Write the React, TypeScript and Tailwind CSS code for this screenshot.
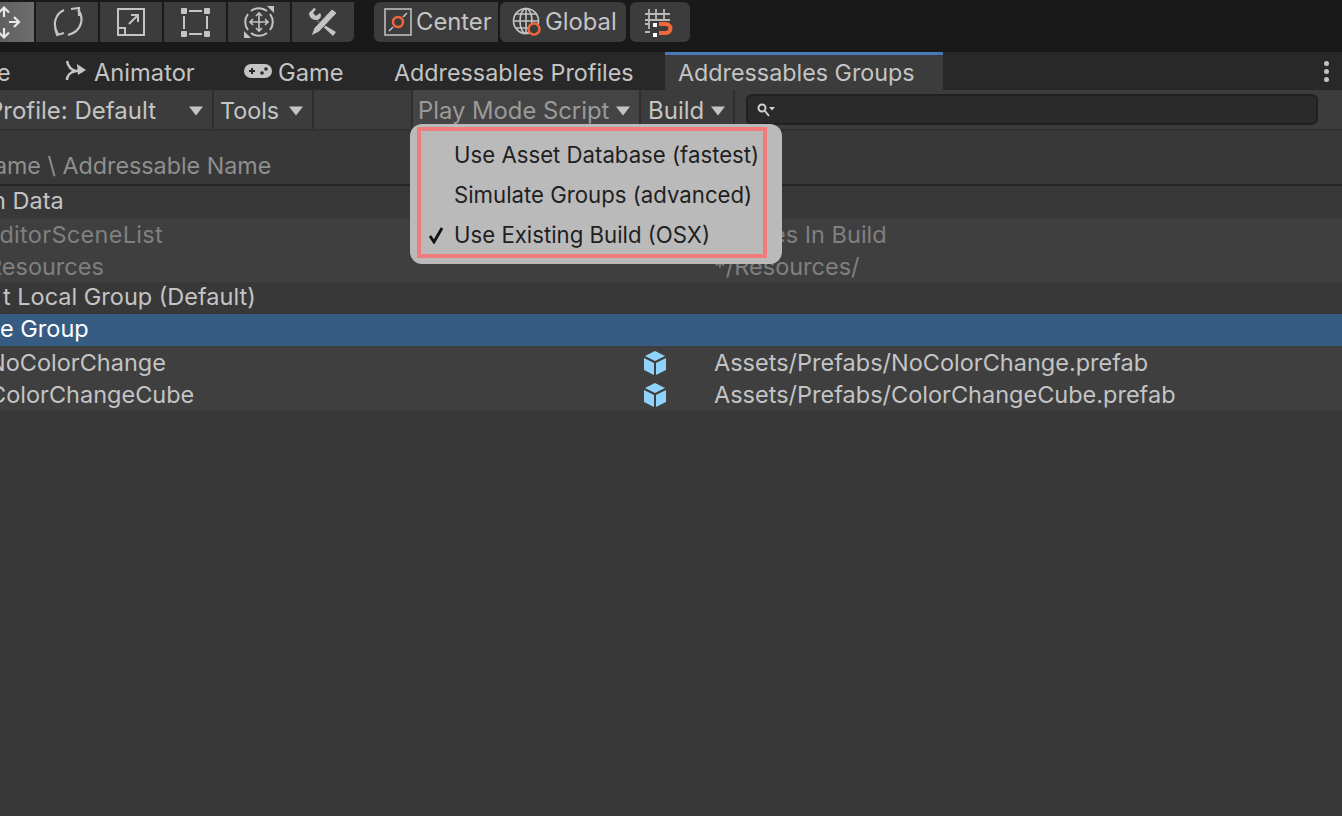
import type { ReactNode } from "react";

const Arrow = ({ className = "" }: { className?: string }) => (
  <svg width="16" height="10" viewBox="0 0 16 10" className={className}>
    <path d="M1 0.5h14L8 9.500z" fill="#c4c4c4" />
  </svg>
);

const ToolBtn = ({ children, className = "" }: { children: ReactNode; className?: string }) => (
  <div className={`flex h-10 w-[62px] items-center justify-center bg-[#3c3c3c] ${className}`}>{children}</div>
);

const MoveIcon = () => (
  <svg width="34" height="40" viewBox="0 0 34 40" fill="none" stroke="#e8e8e8" strokeWidth="2.200">
    <path d="M4 6v9M-1 10.500l5-5 5 5M4 26v9M-1 30.500l5 5 5-5M9 20h10M14 15l5 5-5 5" />
  </svg>
);

const RotateIcon = () => (
  <svg width="32" height="34" viewBox="0 0 32 34" fill="none" stroke="#c4c4c4" strokeWidth="2.200">
    <path d="M13 5C6 8 0 18 7 29M4 23l2 7 7-2M27 5c6 7 5 21-10 25M20 4l8-1 0 8" />
  </svg>
);

const ScaleIcon = () => (
  <svg width="30" height="30" viewBox="0 0 30 30" fill="none" stroke="#c4c4c4" strokeWidth="2">
    <rect x="2" y="2" width="26" height="26" />
    <path d="M2 21h7v7M13 17L22 8M15 8h7v7" />
  </svg>
);

const RectIcon = () => (
  <svg width="30" height="30" viewBox="0 0 30 30" fill="#c4c4c4">
    <rect x="1" y="1" width="6" height="6" rx="1" />
    <rect x="24" y="1" width="6" height="6" rx="1" />
    <rect x="1" y="24" width="6" height="6" rx="1" />
    <rect x="24" y="24" width="6" height="6" rx="1" />
    <rect x="9" y="3" width="13" height="2" />
    <rect x="9" y="26" width="13" height="2" />
    <rect x="3" y="9" width="2" height="13" />
    <rect x="26" y="9" width="2" height="13" />
  </svg>
);

const TransformIcon = () => (
  <svg width="34" height="34" viewBox="0 0 34 34" fill="none" stroke="#c4c4c4" strokeWidth="1.600">
    <path d="M9 6a13 13 0 0 1 16 0M28 9a13 13 0 0 1 0 16M25 28a13 13 0 0 1-16 0M6 25a13 13 0 0 1 0-16" strokeWidth="2" />
    <path d="M17 8v18M8 17h18M14 11l3-3 3 3M14 23l3 3 3-3M11 14l-3 3 3 3M23 14l3 3-3 3" />
    <path d="M25 1h7v7zM2 26v7h7z" fill="#c4c4c4" stroke="none" />
  </svg>
);

const ToolsIcon = () => (
  <svg width="32" height="32" viewBox="0 0 32 32" fill="#c4c4c4">
    <path d="M2 7l5-5 2 1-3 4 3 3 4-3 1 2c0 3-2 5-5 5L29 26l-3 4L9 14C5 14 2 11 2 7z" />
    <path d="M25 3l5 4-18 19-8 4 3-8z" stroke="#3c3c3c" strokeWidth="1" />
  </svg>
);

const CenterIcon = () => (
  <svg width="28" height="28" viewBox="0 0 28 28" fill="none">
    <rect x="1" y="1" width="26" height="26" stroke="#c4c4c4" strokeWidth="1.500" />
    <path d="M5 23l4-4M19 9l4-4" stroke="#c4c4c4" strokeWidth="1.500" />
    <circle cx="14" cy="14" r="5" stroke="#f0673a" strokeWidth="2.500" />
  </svg>
);

const GlobalIcon = () => (
  <svg width="30" height="30" viewBox="0 0 30 30" fill="none">
    <g stroke="#c4c4c4" strokeWidth="1.600">
      <circle cx="14" cy="14" r="12.500" />
      <ellipse cx="14" cy="14" rx="6" ry="12.500" />
      <path d="M2 14h24M4 7h20M4 21h20M14 1v26" />
    </g>
    <circle cx="22" cy="22" r="5.500" fill="#3c3c3c" stroke="#f0673a" strokeWidth="2.500" />
  </svg>
);

const SnapIcon = () => (
  <svg width="32" height="30" viewBox="0 0 32 30" fill="none">
    <path d="M5 2v20M12 2v12M20 2v12M1 7h25M1 13h25M1 17h4M1 25h5" stroke="#b8b8b8" strokeWidth="1.800" />
    <rect x="9" y="16" width="4" height="4" fill="#fff" />
    <rect x="9" y="26" width="4" height="4" fill="#fff" />
    <path d="M15 17h7a4.500 4.500 0 0 1 0 9h-7" stroke="#f0673a" strokeWidth="4" />
  </svg>
);

const AnimatorIcon = () => (
  <svg width="22" height="22" viewBox="0 0 22 22" fill="none" stroke="#c4c4c4" strokeWidth="2.500">
    <path d="M2 1c1 5 4 9 9 10h7M2 20c0-4 3-8 9-9" />
    <path d="M12 4l9 6-8 5z" fill="#c4c4c4" stroke="none" />
  </svg>
);

const GameIcon = () => (
  <svg width="28" height="16" viewBox="0 0 28 16">
    <rect x="0" y="1" width="28" height="14" rx="7" fill="#c4c4c4" />
    <path d="M5 8h6M8 5v6" stroke="#282828" strokeWidth="2" />
    <circle cx="18" cy="10" r="1.800" fill="#282828" />
    <circle cx="22" cy="6" r="1.800" fill="#282828" />
  </svg>
);

const CubeIcon = () => (
  <svg width="24" height="26" viewBox="0 0 24 26" className="ml-[643px]">
    <path d="M12 1l10 5-10 5L2 6z" fill="#8fd2fc" />
    <path d="M1 8l10 5v12L1 20z" fill="#8fd2fc" />
    <path d="M23 8l-10 5v12l10-5z" fill="#8fd2fc" />
  </svg>
);

const SearchIcon = () => (
  <svg width="20" height="16" viewBox="0 0 20 16" fill="none">
    <circle cx="6" cy="6" r="3.500" stroke="#d0d0d0" strokeWidth="2" />
    <path d="M9 9l4 5" stroke="#d0d0d0" strokeWidth="2" />
    <path d="M13 5h6l-3 3.500z" fill="#d0d0d0" />
  </svg>
);

const CheckIcon = () => (
  <svg width="16" height="18" viewBox="0 0 16 18" fill="none" className="absolute -left-[26px] top-[11px]">
    <path d="M2 10l4 6L14 2" stroke="#111111" strokeWidth="2.800" />
  </svg>
);

const Row = ({ bg, children, className = "" }: { bg: string; children: ReactNode; className?: string }) => (
  <div className={`flex h-8 items-center whitespace-nowrap ${bg} ${className}`}>{children}</div>
);

export default function App() {
  return (
    <div className="relative flex h-[816px] w-[1342px] flex-col overflow-hidden bg-[#383838] font-['Inter',sans-serif] text-[23.500px] text-[#c4c4c4]">
      {/* top toolbar */}
      <div className="flex h-[52px] shrink-0 bg-[#191919] pt-0.5">
        <div className="flex h-10 gap-0.5">
          <div className="h-10 w-[34px] bg-gradient-to-r from-[#5f5f5f] to-[#6e6e6e]">
            <MoveIcon />
          </div>
          <ToolBtn><RotateIcon /></ToolBtn>
          <ToolBtn><ScaleIcon /></ToolBtn>
          <ToolBtn><RectIcon /></ToolBtn>
          <ToolBtn><TransformIcon /></ToolBtn>
          <ToolBtn className="rounded-br-md"><ToolsIcon /></ToolBtn>
        </div>
        <div className="ml-5 flex h-10 w-[124px] items-center gap-[4px] rounded-l-md bg-[#3c3c3c] pl-[10px] text-[23.800px]">
          <CenterIcon />
          <span>Center</span>
        </div>
        <div className="ml-0.5 flex h-10 w-[126px] items-center gap-[3px] rounded-md bg-[#3c3c3c] pl-[12px] text-[23.800px]">
          <GlobalIcon />
          <span>Global</span>
        </div>
        <div className="ml-1 flex h-10 w-[60px] items-center justify-center rounded-md bg-[#3c3c3c]">
          <SnapIcon />
        </div>
      </div>

      {/* tabs */}
      <div className="relative flex h-[38px] shrink-0 items-center whitespace-nowrap bg-[#282828] text-[23.300px]">
        <span className="-ml-[3px] mt-1 w-[68px]">e</span>
        <div className="flex w-[179px] items-center gap-[7px] text-[23.700px]">
          <AnimatorIcon />
          <span className="mt-1">Animator</span>
        </div>
        <div className="flex w-[150px] items-center gap-[6px] text-[23.700px]">
          <GameIcon />
          <span className="mt-1">Game</span>
        </div>
        <span className="mt-1 w-[271px]">Addressables Profiles</span>
        <div className="flex h-[38px] w-[278px] items-center border-t-[3px] border-[#4a78b8] bg-[#3c3c3c] pl-[13px] pt-px">
          Addressables Groups
        </div>
        <div className="ml-auto mr-[13px] flex flex-col gap-[3px]">
          <div className="h-[5px] w-[5px] rounded-full bg-[#c4c4c4]" />
          <div className="h-[5px] w-[5px] rounded-full bg-[#c4c4c4]" />
          <div className="h-[5px] w-[5px] rounded-full bg-[#c4c4c4]" />
        </div>
      </div>

      {/* table toolbar */}
      <div className="flex h-[41px] shrink-0 items-center whitespace-nowrap border-b-2 border-[#303030] bg-[#3c3c3c] text-[24px]">
        <div className="flex h-full w-[214px] items-center border-r-2 border-[#2e2e2e] pt-[3px]">
          <span className="-ml-[12px]">Profile: Default</span>
          <Arrow className="ml-auto mr-[8px]" />
        </div>
        <div className="flex h-full w-[100px] items-center border-r-2 border-[#2e2e2e] pl-[6px] pt-[3px] text-[23.300px]">
          <span>Tools</span>
          <Arrow className="ml-[9px]" />
        </div>
        <div className="ml-[97px] flex h-full w-[230px] items-center border-x-2 border-[#2e2e2e] bg-[#444444] pl-[5px] pt-[3px] text-[23.800px] text-[#9a9a9a]">
          <span>Play Mode Script</span>
          <Arrow className="ml-[6px]" />
        </div>
        <div className="flex h-full w-[94px] items-center border-r-2 border-[#2e2e2e] pl-[7px] pt-[3px]">
          <span>Build</span>
          <Arrow className="ml-[6px]" />
        </div>
        <div className="ml-[11px] flex h-[31px] w-[572px] items-center rounded-md border-2 border-[#212121] bg-[#2a2a2a] pl-2">
          <SearchIcon />
        </div>
      </div>

      {/* table */}
      <div className="flex h-[55px] shrink-0 items-end whitespace-nowrap border-b-2 border-[#252525] text-[23.300px] text-[#8f8f8f]">
        <span className="-ml-[98px]">Group Name \ Addressable Name</span>
      </div>
      <Row bg="bg-[#383838]" className="pb-[2px]"><span className="-ml-[8px]">n Data</span></Row>
      <Row bg="bg-[#3f3f3f]" className="pt-[2px] text-[#808080]">
        <span className="-ml-[15px] w-[731px] tracking-[0.3px]">EditorSceneList</span>
        <span>Scenes In Build</span>
      </Row>
      <Row bg="bg-[#3f3f3f]" className="pt-[2px] text-[#808080]">
        <span className="-ml-[13px] w-[727px]">Resources</span>
        <span>*/Resources/</span>
      </Row>
      <Row bg="bg-[#383838]" className="pb-[2px]"><span className="ml-[3px]">t Local Group (Default)</span></Row>
      <Row bg="bg-[#365c84]" className="pb-[2px] text-white"><span>e Group</span></Row>
      <Row bg="bg-[#3f3f3f]" className="pt-[2px]">
        <span className="absolute -ml-[12px]">NoColorChange</span>
        <CubeIcon />
        <span className="ml-[47px]">Assets/Prefabs/NoColorChange.prefab</span>
      </Row>
      <Row bg="bg-[#3f3f3f]" className="pt-[2px]">
        <span className="absolute -ml-[11px]">ColorChangeCube</span>
        <CubeIcon />
        <span className="ml-[47px]">Assets/Prefabs/ColorChangeCube.prefab</span>
      </Row>

      {/* dropdown */}
      <div className="absolute left-[410px] top-[124px] h-[140px] w-[372px] rounded-xl bg-[#bababa] pl-[7px] pt-[3px] text-[22.200px] text-[#1f1f1f]">
        <div className="flex h-[131px] w-[350px] flex-col justify-center whitespace-nowrap border-4 border-[#f27c7c] pl-[33px] pt-1">
          <div className="h-10 leading-10">Use Asset Database (fastest)</div>
          <div className="h-10 leading-10">Simulate Groups (advanced)</div>
          <div className="relative h-10 leading-10">
            <CheckIcon />
            Use Existing Build (OSX)
          </div>
        </div>
      </div>
    </div>
  );
}
